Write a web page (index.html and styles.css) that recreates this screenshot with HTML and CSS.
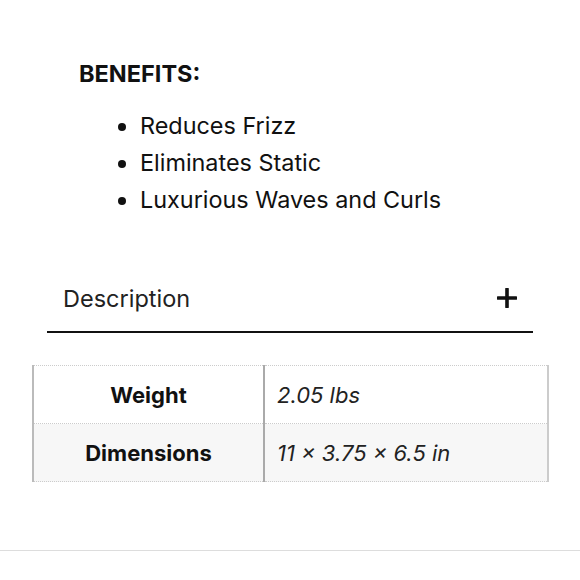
FILE: index.html
```html
<!DOCTYPE html>
<html lang="en">
<head>
    <meta charset="UTF-8">
    <title>Product details</title>
    <link rel="stylesheet" href="styles.css">
</head>
<body>
    <div class="page">
        <div class="benefits">
            <h3>BENEFITS:</h3>
            <ul>
                <li>Reduces Frizz</li>
                <li>Eliminates Static</li>
                <li>Luxurious Waves and Curls</li>
            </ul>
        </div>

        <!-- accordion -->
        <div class="accordion">
            <span class="acc-title">Description</span>
            <svg class="acc-plus" width="20" height="20" viewBox="0 0 20 20">
                <path d="M10 1v18M1 10h18" stroke="#111" stroke-width="3.6" stroke-linecap="round"/>
            </svg>
        </div>

        <table class="attrs">
            <tr>
                <th>Weight</th>
                <td>2.05 lbs</td>
            </tr>
            <tr class="alt">
                <th>Dimensions</th>
                <td>11 &times; 3.75 &times; 6.5 in</td>
            </tr>
        </table>
    </div>
    <div class="footer-line"></div>
</body>
</html>
```

FILE: styles.css
```css
body {
    margin: 0;
    font-family: Inter, "Liberation Sans", Arial, sans-serif;
    color: #111;
    background: #fff;
}
.page {
    height: 550px;
    padding-top: 60px;
    box-sizing: border-box;
}
.benefits { padding-left: 79px; }
.benefits h3 {
    margin: 0;
    font-size: 23.5px;
    font-weight: 700;
    line-height: 28px;
}
.benefits ul {
    margin: 19px 0 0;
    padding-left: 61px;
    font-size: 23.4px;
    line-height: 37px;
}
.benefits li { padding-left: 0; }
.accordion {
    display: flex;
    align-items: center;
    justify-content: space-between;
    margin: 53px 47px 0;
    padding: 0 16px 0 16px;
    height: 60px;
    border-bottom: 2px solid #111;
}
.acc-title {
    font-size: 23.5px;
    color: #222;
    padding-bottom: 6px;
}
.acc-plus { margin-bottom: 7px; }
.attrs {
    margin: 32px 32px 0;
    width: 517px;
    border-collapse: collapse;
    border-left: 2px solid #bbb;
    border-right: 2px solid #ccc;
}
.attrs th, .attrs td {
    height: 57px;
    padding: 0;
    font-size: 22px;
    border-top: 1px dotted #ccc;
    border-bottom: 1px dotted #ccc;
}
.attrs th {
    width: 229px;
    font-weight: 700;
    text-align: center;
    border-right: 2px solid #aaa;
}
.attrs td {
    font-style: italic;
    padding-left: 12px;
    color: #222;
}
.attrs .alt th, .attrs .alt td { background: #f7f7f7; }
.footer-line {
    height: 1px;
    background: #ddd;
}
```
